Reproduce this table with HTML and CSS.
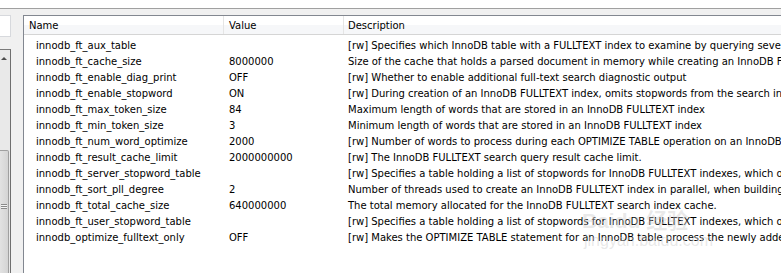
FILE: index.html
```html
<!DOCTYPE html>
<html>
<head>
<meta charset="utf-8">
<link rel="stylesheet" href="styles.css">
</head>
<body>
<div class="topbar"></div>
<div class="workspace">
  <div class="side">
    <div class="side-input"></div>
    <div class="side-list">
      <div class="scroll">
        <div class="arrow-up"></div>
        <div class="thumb"><div class="grip"></div></div>
      </div>
    </div>
  </div>
  <div class="grid">
    <div class="header">
      <div class="hcell c-name">Name</div>
      <div class="hcell c-value">Value</div>
      <div class="hcell c-desc">Description</div>
    </div>
    <div class="rows">
      <div class="row"><span class="c-name">innodb_ft_aux_table</span><span class="c-value"></span><span class="c-desc">[rw] Specifies which InnoDB table with a FULLTEXT index to examine by querying several INFORMATION_SCHEMA tables</span></div>
      <div class="row"><span class="c-name">innodb_ft_cache_size</span><span class="c-value">8000000</span><span class="c-desc">Size of the cache that holds a parsed document in memory while creating an InnoDB FULLTEXT index</span></div>
      <div class="row"><span class="c-name">innodb_ft_enable_diag_print</span><span class="c-value">OFF</span><span class="c-desc">[rw] Whether to enable additional full-text search diagnostic output</span></div>
      <div class="row"><span class="c-name">innodb_ft_enable_stopword</span><span class="c-value">ON</span><span class="c-desc">[rw] During creation of an InnoDB FULLTEXT index, omits stopwords from the search index</span></div>
      <div class="row"><span class="c-name">innodb_ft_max_token_size</span><span class="c-value">84</span><span class="c-desc">Maximum length of words that are stored in an InnoDB FULLTEXT index</span></div>
      <div class="row"><span class="c-name">innodb_ft_min_token_size</span><span class="c-value">3</span><span class="c-desc">Minimum length of words that are stored in an InnoDB FULLTEXT index</span></div>
      <div class="row"><span class="c-name">innodb_ft_num_word_optimize</span><span class="c-value">2000</span><span class="c-desc">[rw] Number of words to process during each OPTIMIZE TABLE operation on an InnoDB FULLTEXT index</span></div>
      <div class="row"><span class="c-name">innodb_ft_result_cache_limit</span><span class="c-value">2000000000</span><span class="c-desc">[rw] The InnoDB FULLTEXT search query result cache limit.</span></div>
      <div class="row"><span class="c-name">innodb_ft_server_stopword_table</span><span class="c-value"></span><span class="c-desc">[rw] Specifies a table holding a list of stopwords for InnoDB FULLTEXT indexes, which overrides the default list</span></div>
      <div class="row"><span class="c-name">innodb_ft_sort_pll_degree</span><span class="c-value">2</span><span class="c-desc">Number of threads used to create an InnoDB FULLTEXT index in parallel, when building a search index</span></div>
      <div class="row"><span class="c-name">innodb_ft_total_cache_size</span><span class="c-value">640000000</span><span class="c-desc">The total memory allocated for the InnoDB FULLTEXT search index cache.</span></div>
      <div class="row"><span class="c-name">innodb_ft_user_stopword_table</span><span class="c-value"></span><span class="c-desc">[rw] Specifies a table holding a list of stopwords for InnoDB FULLTEXT indexes, which overrides the default list</span></div>
      <div class="row"><span class="c-name">innodb_optimize_fulltext_only</span><span class="c-value">OFF</span><span class="c-desc">[rw] Makes the OPTIMIZE TABLE statement for an InnoDB table process the newly added words</span></div>
    </div>
    <div class="watermark"><div class="wm-big">Baidu 经验</div><div class="wm-small">jingyan.baidu.com</div></div>
  </div>
</div>
</body>
</html>
```

FILE: styles.css
```css
html, body {
  margin: 0;
  padding: 0;
  height: 100%;
  overflow: hidden;
}
body {
  background: #f0f0f0;
  font-family: "DejaVu Sans", Verdana, sans-serif;
  font-size: 10px;
  color: #000;
}
.topbar {
  height: 8px;
  background: #fff;
  border-bottom: 1px solid #a0a0a0;
}
.workspace {
  display: flex;
  gap: 12px;
  padding-top: 6px;
  height: 300px;
}
.side {
  width: 11px;
  flex: none;
  display: flex;
  flex-direction: column;
}
.side-input {
  height: 20px;
  background: #fff;
  border: 1px solid #d7d9dd;
  border-left: none;
}
.side-list {
  margin-top: 12px;
  flex: 1;
  border-top: 1px solid #7a7a7a;
  border-right: 1px solid #6f6f6f;
  background: #fff;
}
.scroll {
  width: 10px;
  height: 100%;
  background: #e9e9e9;
  position: relative;
}
.arrow-up {
  position: absolute;
  left: 1px;
  top: 7px;
  width: 0;
  height: 0;
  border-left: 3px solid transparent;
  border-right: 3px solid transparent;
  border-bottom: 3px solid #4d4d4d;
}
.thumb {
  position: absolute;
  left: 0;
  right: 1px;
  top: 100px;
  bottom: 0;
  background: linear-gradient(to right, #e2e2e2, #d4d4d4);
  border: 1px solid #a0a0a0;
  border-left: none;
  border-radius: 0 2px 2px 0;
}
.grip {
  position: absolute;
  left: 1px;
  top: 53px;
  width: 6px;
  height: 5px;
  background: repeating-linear-gradient(to bottom, #8a8a8a 0 1px, #f4f4f4 1px 2px);
}
.grid {
  flex: 1;
  position: relative;
  background: #fff;
  border-top: 1px solid #828790;
  border-left: 1px solid #828790;
  overflow: hidden;
}
.header {
  display: flex;
  height: 18px;
  background: linear-gradient(to bottom, #fff 0, #fff 50%, #f6f7f9 50%, #f6f7f9 100%);
  border-bottom: 1px solid #d5d5d5;
}
.hcell {
  display: flex;
  align-items: center;
  padding-left: 5px;
  box-sizing: border-box;
  white-space: nowrap;
}
.header .c-name { width: 200px; flex: none; border-right: 1px solid #e5e5e5; }
.header .c-value { width: 120px; flex: none; border-right: 1px solid #e5e5e5; }
.header .c-desc { padding-left: 4px; }
.rows {
  padding-top: 2px;
}
.row {
  display: flex;
  height: 16px;
  align-items: center;
  white-space: nowrap;
}
.row .c-name { width: 200px; padding-left: 12px; box-sizing: border-box; flex: none; }
.row .c-value { width: 120px; padding-left: 5px; box-sizing: border-box; flex: none; }
.row .c-desc { padding-left: 4px; }
.watermark {
  position: absolute;
  left: 558px;
  top: 193px;
  color: rgba(205, 205, 205, 0.45);
  font-family: "Liberation Sans", "Noto Sans CJK SC", sans-serif;
  pointer-events: none;
}
.wm-big { font-size: 21px; font-weight: bold; height: 23px; line-height: 23px; overflow: visible; white-space: nowrap; }
.wm-small { font-size: 16px; height: 17px; line-height: 17px; margin-left: 2px; white-space: nowrap; }
```
